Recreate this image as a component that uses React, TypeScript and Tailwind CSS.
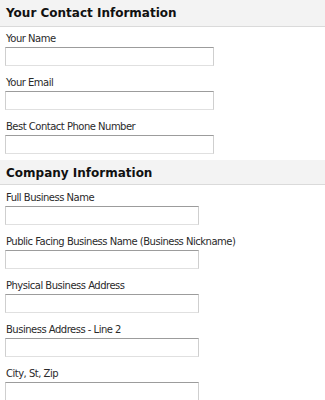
const contactFields = ["Your Name", "Your Email", "Best Contact Phone Number"]

const companyFields = [
  "Full Business Name",
  "Public Facing Business Name (Business Nickname)",
  "Physical Business Address",
  "Business Address - Line 2",
  "City, St, Zip",
]

function SectionHeader({ title, height }: { title: string; height: string }) {
  return (
    <div className={`${height} bg-[#f3f3f3] border-b border-[#dadada] px-[6px] pt-[7px]`}>
      <h2 className="text-[12px] font-bold text-[#111] leading-[12px]">{title}</h2>
    </div>
  )
}

function Field({ label, width }: { label: string; width: string }) {
  return (
    <div className="flex flex-col">
      <label className="text-[10px] tracking-[-0.5px] text-[#2a2a2a] leading-[12px] pl-[1px]">{label}</label>
      <input
        type="text"
        className={`${width} h-[19px] mt-[2px] bg-white border border-[#cfcfcf] border-t-[#9c9c9c] border-b-[#e0e0e0] outline-none`}
      />
    </div>
  )
}

export default function App() {
  return (
    <div className="w-[325px] h-[400px] overflow-hidden bg-white font-['DejaVu_Sans',Verdana,sans-serif]">
      <SectionHeader title="Your Contact Information" height="h-[27px]" />
      <div className="flex flex-col gap-[11px] px-[5px] pt-[6px] pb-[6px]">
        {contactFields.map((f) => (
          <Field key={f} label={f} width="w-[209px]" />
        ))}
      </div>
      <SectionHeader title="Company Information" height="h-[25px]" />
      <div className="flex flex-col gap-[11px] px-[5px] pt-[7px]">
        {companyFields.map((f) => (
          <Field key={f} label={f} width="w-[194px]" />
        ))}
      </div>
    </div>
  )
}
